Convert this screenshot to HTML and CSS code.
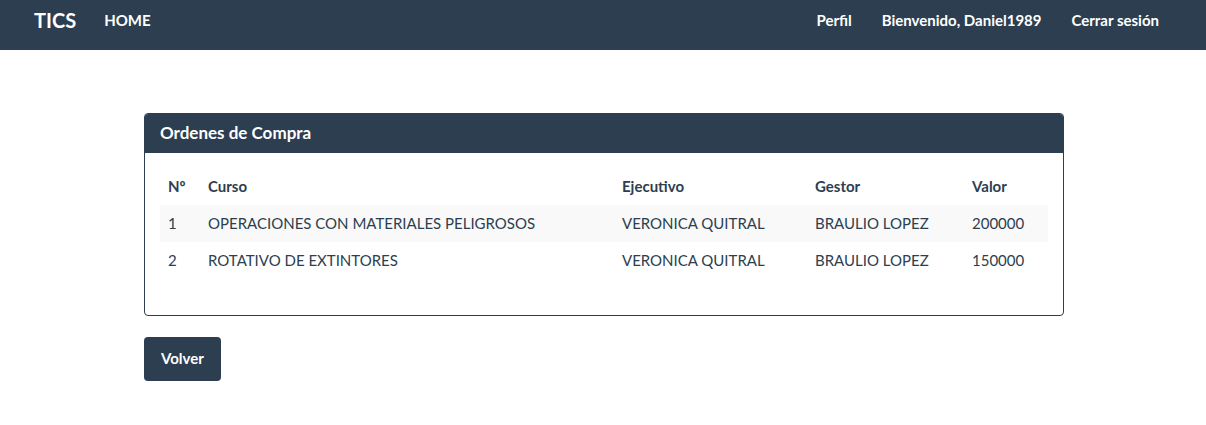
FILE: index.html
```html
<!DOCTYPE html>
<html lang="es">
<head>
<meta charset="utf-8">
<title>Ordenes de Compra</title>
<link rel="stylesheet" href="styles.css">
</head>
<body>
<nav class="navbar">
  <div class="nav-left">
    <a class="brand" href="#">TICS</a>
    <a class="nav-link" href="#">HOME</a>
  </div>
  <div class="nav-right">
    <a class="nav-link" href="#">Perfil</a>
    <a class="nav-link" href="#">Bienvenido, Daniel1989</a>
    <a class="nav-link" href="#">Cerrar sesión</a>
  </div>
</nav>
<main class="container">
  <section class="panel">
    <div class="panel-heading">Ordenes de Compra</div>
    <div class="panel-body">
      <table class="table">
        <thead>
          <tr>
            <th class="c-num">Nº</th>
            <th class="c-curso">Curso</th>
            <th class="c-ej">Ejecutivo</th>
            <th class="c-gestor">Gestor</th>
            <th class="c-valor">Valor</th>
          </tr>
        </thead>
        <tbody>
          <tr class="odd">
            <td>1</td>
            <td>OPERACIONES CON MATERIALES PELIGROSOS</td>
            <td>VERONICA QUITRAL</td>
            <td>BRAULIO LOPEZ</td>
            <td>200000</td>
          </tr>
          <tr>
            <td>2</td>
            <td>ROTATIVO DE EXTINTORES</td>
            <td>VERONICA QUITRAL</td>
            <td>BRAULIO LOPEZ</td>
            <td>150000</td>
          </tr>
        </tbody>
      </table>
    </div>
  </section>
  <a class="btn" href="#">Volver</a>
</main>
</body>
</html>
```
FILE: styles.css
```css
* { box-sizing: border-box; }
html, body { margin: 0; padding: 0; }
body {
  font-family: Lato, "Open Sans", sans-serif;
  font-size: 15px;
  line-height: 21px;
  color: #2c3e50;
  background: #fff;
}
a { text-decoration: none; }

.navbar {
  height: 50px;
  background: #2c3e50;
  display: flex;
  justify-content: space-between;
  align-items: flex-start;
  padding: 0 32px 0 19px;
}
.nav-left, .nav-right { display: flex; align-items: flex-start; }
.brand {
  color: #fff;
  font-size: 20px;
  font-weight: 700;
  line-height: 21px;
  padding: 10px 15px;
}
.nav-link {
  color: #fff;
  font-weight: 700;
  font-size: 15px;
  line-height: 21px;
  padding: 10px 15px;
}
.nav-left .nav-link { padding-left: 13px; }

.container {
  width: 922px;
  margin: 63px auto 0;
  padding-left: 2px;
}
.panel {
  width: 920px;
  border: 1px solid #2c3e50;
  border-radius: 4px;
  margin-bottom: 21px;
  overflow: hidden;
}
.panel-heading {
  background: #2c3e50;
  color: #fff;
  font-size: 17px;
  font-weight: 700;
  line-height: 20px;
  padding: 9px 15px 10px;
}
.panel-body { padding: 15px; }
.table {
  width: 888px;
  border-collapse: collapse;
  margin-bottom: 21px;
}
.table th, .table td {
  text-align: left;
  padding: 8px;
  line-height: 21px;
  vertical-align: top;
}
.table th { font-weight: 700; }
.c-num { width: 40px; }
.c-curso { width: 414px; }
.c-ej { width: 193px; }
.c-gestor { width: 157px; }
.c-valor { width: 84px; }
.table tr.odd td { background: #f9f9f9; }

.btn {
  display: inline-block;
  background: #2c3e50;
  color: #fff;
  font-weight: 700;
  font-size: 15px;
  line-height: 21px;
  padding: 11px 17px 12px;
  border-radius: 4px;
}
```
